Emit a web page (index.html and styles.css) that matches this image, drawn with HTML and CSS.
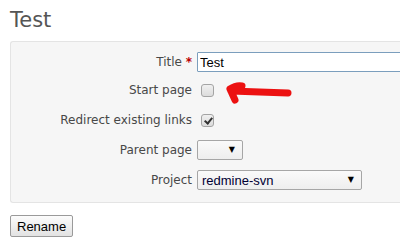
FILE: index.html
```html
<!DOCTYPE html>
<html lang="en">
<head>
  <meta charset="UTF-8">
  <title>Rename</title>
  <link rel="stylesheet" href="styles.css">
</head>
<body>
  <h2 class="page-title">Test</h2>
  <form class="rename-form">
    <div class="box">
      <div class="row row-first">
        <label for="title">Title <span class="required">*</span></label>
        <input type="text" id="title" class="title-input" value="Test">
      </div>
      <div class="row">
        <label for="start">Start page</label>
        <input type="checkbox" id="start">
        <svg class="arrow" width="74" height="26" viewBox="0 0 74 26">
          <path d="M8 8 Q14 4 20 5 M8 8 L13 19 M9 10 L66 12" fill="none" stroke="#ec1111" stroke-width="7" stroke-linecap="round" stroke-linejoin="round"/>
        </svg>
      </div>
      <div class="row">
        <label for="redirect">Redirect existing links</label>
        <input type="checkbox" id="redirect" checked>
      </div>
      <div class="row">
        <label for="parent">Parent page</label>
        <span class="select-wrap"><select id="parent" class="parent-select"><option></option></select></span>
      </div>
      <div class="row">
        <label for="project">Project</label>
        <span class="select-wrap"><select id="project" class="project-select"><option>redmine-svn</option></select></span>
      </div>
    </div>
    <button type="button" class="btn">Rename</button>
  </form>
</body>
</html>
```

FILE: styles.css
```css
body {
  margin: 0;
  padding: 0 0 0 10px;
  font-family: 'DejaVu Sans', sans-serif;
  font-size: 12px;
  color: #484848;
  background: #fff;
  overflow: hidden;
}
.page-title {
  margin: 0;
  padding: 8px 0 0;
  font-size: 21px;
  line-height: 24px;
  font-weight: normal;
  color: #555;
  height: 33px;
}
.box {
  box-sizing: border-box;
  width: 390px;
  overflow: hidden;
  background: #f6f6f6;
  border: 1px solid #e4e4e4;
  border-right: none;
  border-radius: 3px 0 0 3px;
  padding: 7px 0 7px;
  margin-bottom: 12px;
}
.row {
  display: flex;
  align-items: center;
  height: 30px;
  position: relative;
}
.row-first { height: 26px; }
.row label {
  flex: 0 0 auto;
  width: 181px;
  text-align: right;
  padding-right: 5px;
}
.required { color: #bb0000; font-weight: bold; }
.title-input {
  flex: 0 0 auto;
  width: 210px;
  height: 20px;
  box-sizing: border-box;
  border: 1px solid #7b9ebd;
  border-radius: 1px;
  font-family: 'Liberation Sans', sans-serif;
  font-size: 13px;
  color: #000;
  padding: 1px 2px;
  margin: 0;
  outline: none;
}
input[type=checkbox] {
  appearance: none;
  flex: 0 0 auto;
  margin: 0 0 0 4px;
  width: 13px;
  height: 13px;
  border: 1px solid #a4a4a4;
  border-radius: 3px;
  background: linear-gradient(#f0f0f0, #dcdcdc);
  position: relative;
}
input[type=checkbox]:checked::after {
  content: '';
  position: absolute;
  left: 4px;
  top: 1px;
  width: 3px;
  height: 6px;
  border: solid #333;
  border-width: 0 2px 2px 0;
  transform: rotate(40deg);
}
.arrow { position: absolute; left: 211px; top: 6px; }
.select-wrap { position: relative; display: inline-block; }
.select-wrap::after {
  content: '\25BC';
  position: absolute;
  right: 8px;
  top: 5px;
  font-size: 8px;
  color: #000;
  pointer-events: none;
}
select {
  appearance: none;
  font-family: 'Liberation Sans', sans-serif;
  font-size: 13px;
  color: #000033;
  height: 20px;
  margin: 0;
  padding: 0 4px;
  border: 1px solid #a6a6a6;
  border-radius: 2px;
  background: linear-gradient(#fafafa, #eeeeee);
  display: block;
}
.parent-select { width: 46px; }
.project-select { width: 165px; }
.btn {
  font-family: 'Liberation Sans', sans-serif;
  font-size: 13px;
  color: #000;
  padding: 0 6px;
  width: 63px;
  height: 22px;
  margin: 0;
  border: 1px solid #9a9a9a;
  border-radius: 2px;
  background: linear-gradient(#fcfcfc, #e2e2e2);
}
```
